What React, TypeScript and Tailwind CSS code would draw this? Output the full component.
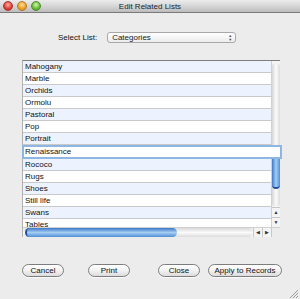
import React from "react";

const rows = [
  "Mahogany",
  "Marble",
  "Orchids",
  "Ormolu",
  "Pastoral",
  "Pop",
  "Portrait",
  "Renaissance",
  "Rococo",
  "Rugs",
  "Shoes",
  "Still life",
  "Swans",
  "Tables",
];

function Btn({ label, w }: { label: string; w: string }) {
  return (
    <div
      className={`${w} h-[13px] rounded-full border border-[#7d7d7d] bg-gradient-to-b from-[#ffffff] via-[#f2f2f2] to-[#dcdcdc] flex items-center justify-center text-[8px] leading-none text-[#111] whitespace-nowrap shadow-[0_1px_0_rgba(255,255,255,0.8)]`}
    >
      {label}
    </div>
  );
}

export default function App() {
  return (
    <div
      className="w-[300px] h-[299px] bg-[#ececec] flex flex-col overflow-hidden relative"
      style={{ fontFamily: '"Liberation Sans", Arial, sans-serif' }}
    >
      {/* Title bar */}
      <div className="h-[13px] shrink-0 bg-gradient-to-b from-[#ececec] via-[#d6d6d6] to-[#bcbcbc] border-b border-[#7a7a7a] relative flex items-center justify-center">
        <div className="absolute left-[3px] top-[1px] flex gap-[4px]">
          <div className="w-[10px] h-[10px] rounded-full border border-[#a33] bg-[radial-gradient(circle_at_50%_35%,#ffb3a8,#e0433a_55%,#b8231c)]" />
          <div className="w-[10px] h-[10px] rounded-full border border-[#b57a20] bg-[radial-gradient(circle_at_50%_35%,#ffe2a0,#f0a22a_55%,#c9801a)]" />
          <div className="w-[10px] h-[10px] rounded-full border border-[#4d8a2a] bg-[radial-gradient(circle_at_50%_35%,#d6f5b0,#6cbf3a_55%,#3f9420)]" />
        </div>
        <span className="text-[8px] leading-none text-[#222] pt-[1px]">Edit Related Lists</span>
      </div>

      {/* Select list */}
      <div className="mt-[19px] pl-[58px] flex items-center h-[11px]">
        <span className="text-[8px] leading-none text-[#111] whitespace-nowrap">Select List:</span>
        <div className="ml-[10px] w-[129px] h-[11px] rounded-[3px] border border-[#a8a8a8] bg-gradient-to-b from-[#ffffff] to-[#ececec] flex items-center justify-between pl-[4px] pr-[3px]">
          <span className="text-[8px] leading-none text-[#222]">Categories</span>
          <span className="flex flex-col items-center leading-none text-[#555]">
            <span className="text-[4px] leading-[4px]">▲</span>
            <span className="text-[4px] leading-[4px]">▼</span>
          </span>
        </div>
      </div>

      {/* List */}
      <div className="mt-[17px] ml-[22px] w-[258px] h-[177px] relative flex flex-col border-l border-[#b0b0b0] border-t border-t-[#7e7e7e] bg-white">
        <div className="flex flex-1 min-h-0">
          <div className="flex-1 flex flex-col overflow-hidden">
            {rows.map((r, i) => (
              <div
                key={r}
                className={`${r === "Renaissance" ? "h-[14px]" : "h-[12px]"} shrink-0 border-b border-[#c9c9c9] ${
                  i % 2 === 0 ? "bg-[#edf3fe]" : "bg-white"
                } flex items-center pl-[2px] text-[8px] leading-none text-[#111]`}
              >
                {r === "Renaissance" ? "" : r}
              </div>
            ))}
          </div>
          {/* vertical scrollbar */}
          <div className="w-[9px] shrink-0 flex flex-col bg-[#f4f4f4] border-l border-[#d0d0d0]">
            <div className="flex-1 relative">
              <div className="absolute inset-x-0 top-[2px] bottom-[0px] rounded-t-full rounded-b-full bg-gradient-to-r from-[#d8d8d8] via-[#fbfbfb] to-[#dcdcdc]" />
              <div className="absolute inset-x-0 top-[88px] h-[40px] rounded-full bg-gradient-to-r from-[#3a78c8] via-[#a6cdf2] to-[#4f8fd6] border-b-2 border-[#1f4f9a]" />
            </div>
            <div className="h-[10px] flex items-center justify-center text-[5px] text-[#333] border-t border-[#c8c8c8]">▲</div>
            <div className="h-[10px] flex items-center justify-center text-[5px] text-[#333] border-t border-[#c8c8c8]">▼</div>
          </div>
        </div>
        {/* horizontal scrollbar */}
        <div className="h-[10px] shrink-0 flex bg-[#f4f4f4] border-t border-[#d0d0d0]">
          <div className="flex-1 relative">
            <div className="absolute inset-y-0 left-0 right-0 rounded-full bg-gradient-to-b from-[#d8d8d8] via-[#fbfbfb] to-[#dcdcdc]" />
            <div className="absolute top-0 bottom-0 left-[2px] w-[152px] rounded-full bg-gradient-to-b from-[#3a78c8] via-[#a6cdf2] to-[#4f8fd6] border-l-2 border-[#1f4f9a]" />
          </div>
          <div className="w-[9px] flex items-center justify-center text-[5px] text-[#333] border-l border-[#c8c8c8]">◀</div>
          <div className="w-[9px] flex items-center justify-center text-[5px] text-[#333] border-l border-[#c8c8c8]">▶</div>
          <div className="w-[9px] bg-[#ececec] border-l border-[#c8c8c8]" />
        </div>
        {/* edit field overlay */}
        <div className="absolute left-[-1px] right-[-2px] top-[84px] h-[14px] border-2 border-[#8db6e3] bg-white flex items-center pl-[1px] text-[8px] leading-none text-[#111]">
          Renaissance
        </div>
      </div>

      {/* Buttons */}
      <div className="mt-[27px] pl-[22px] flex items-center">
        <Btn label="Cancel" w="w-[42px]" />
        <div className="ml-[24px]">
          <Btn label="Print" w="w-[42px]" />
        </div>
        <div className="ml-[28px]">
          <Btn label="Close" w="w-[42px]" />
        </div>
        <div className="ml-[8px]">
          <Btn label="Apply to Records" w="w-[74px]" />
        </div>
      </div>

      {/* resize grip */}
      <svg className="absolute right-[2px] bottom-[1px]" width="9" height="9" viewBox="0 0 9 9">
        <line x1="1" y1="9" x2="9" y2="1" stroke="#9a9a9a" strokeWidth="1" />
        <line x1="4" y1="9" x2="9" y2="4" stroke="#9a9a9a" strokeWidth="1" />
        <line x1="7" y1="9" x2="9" y2="7" stroke="#9a9a9a" strokeWidth="1" />
      </svg>
    </div>
  );
}
